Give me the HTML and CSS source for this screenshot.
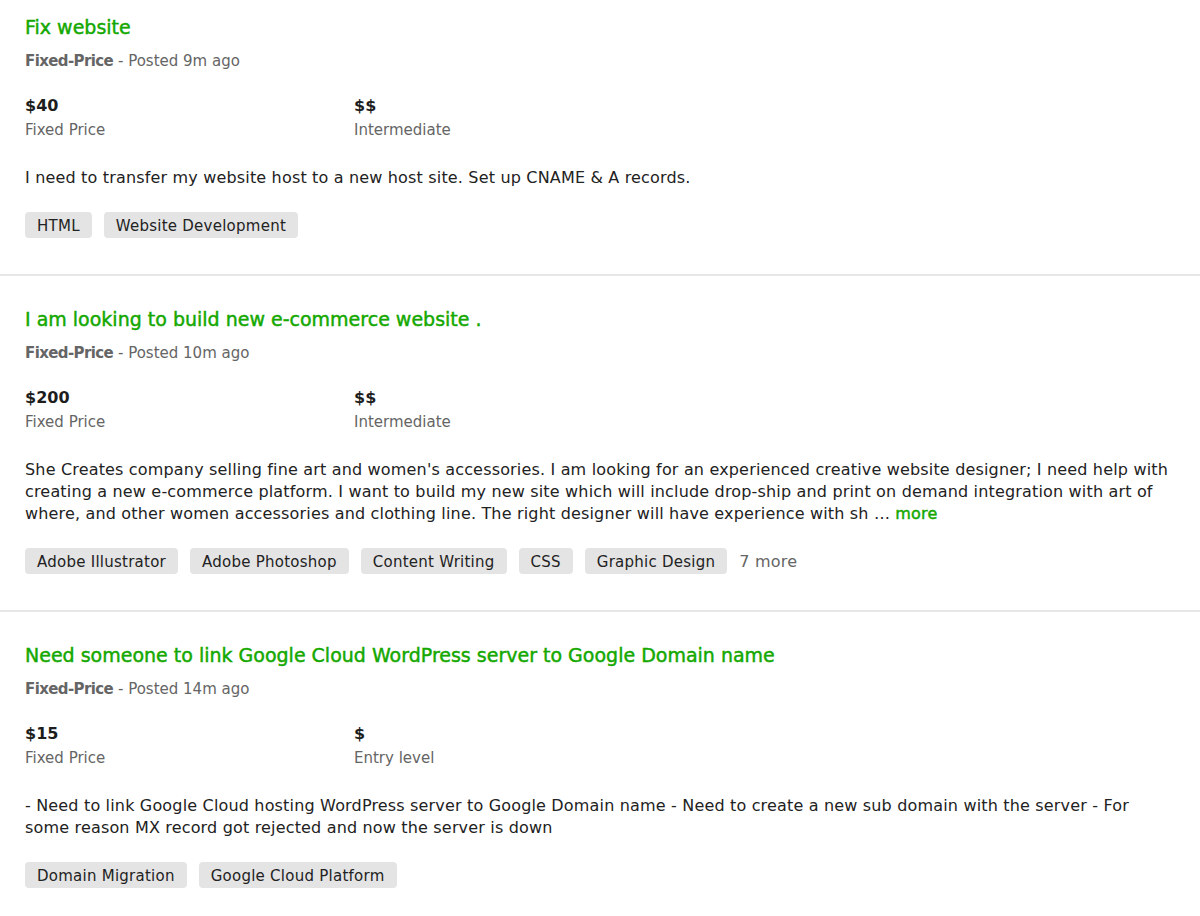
FILE: index.html
```html
<!DOCTYPE html>
<html>
<head>
<meta charset="utf-8">
<link rel="stylesheet" href="styles.css">
</head>
<body>
<div class="feed">
  <section class="job">
    <h2 class="job-title">Fix website</h2>
    <div class="job-meta"><strong>Fixed-Price</strong> - Posted 9m ago</div>
    <div class="job-terms">
      <div class="term"><div class="term-value">$40</div><div class="term-label">Fixed Price</div></div>
      <div class="term"><div class="term-value">$$</div><div class="term-label">Intermediate</div></div>
    </div>
    <p class="job-desc">I need to transfer my website host to a new host site. Set up CNAME &amp; A records.</p>
    <div class="tags">
      <span class="tag">HTML</span>
      <span class="tag">Website Development</span>
    </div>
  </section>
  <section class="job">
    <h2 class="job-title">I am looking to build new e-commerce website .</h2>
    <div class="job-meta"><strong>Fixed-Price</strong> - Posted 10m ago</div>
    <div class="job-terms">
      <div class="term"><div class="term-value">$200</div><div class="term-label">Fixed Price</div></div>
      <div class="term"><div class="term-value">$$</div><div class="term-label">Intermediate</div></div>
    </div>
    <p class="job-desc">She Creates company selling fine art and women's accessories. I am looking for an experienced creative website designer; I need help with creating a new e-commerce platform. I want to build my new site which will include drop-ship and print on demand integration with art of where, and other women accessories and clothing line. The right designer will have experience with sh &hellip; <a class="more" href="#">more</a></p>
    <div class="tags">
      <span class="tag">Adobe Illustrator</span>
      <span class="tag">Adobe Photoshop</span>
      <span class="tag">Content Writing</span>
      <span class="tag">CSS</span>
      <span class="tag">Graphic Design</span>
      <span class="tags-more">7 more</span>
    </div>
  </section>
  <section class="job">
    <h2 class="job-title">Need someone to link Google Cloud WordPress server to Google Domain name</h2>
    <div class="job-meta"><strong>Fixed-Price</strong> - Posted 14m ago</div>
    <div class="job-terms">
      <div class="term"><div class="term-value">$15</div><div class="term-label">Fixed Price</div></div>
      <div class="term"><div class="term-value">$</div><div class="term-label">Entry level</div></div>
    </div>
    <p class="job-desc">- Need to link Google Cloud hosting WordPress server to Google Domain name - Need to create a new sub domain with the server - For some reason MX record got rejected and now the server is down</p>
    <div class="tags">
      <span class="tag">Domain Migration</span>
      <span class="tag">Google Cloud Platform</span>
    </div>
  </section>
</div>
</body>
</html>
```
FILE: styles.css
```css
html, body {
  margin: 0;
  padding: 0;
  background: #ffffff;
}
body {
  font-family: "DejaVu Sans", "Open Sans", sans-serif;
  color: #222222;
}
.feed {
  display: flex;
  flex-direction: column;
}
.job {
  padding: 31px 25px 36px 25px;
  border-bottom: 2px solid #e6e6e6;
}
.job:first-child {
  padding-top: 15px;
}
.job:last-child {
  border-bottom: none;
}
.job-title {
  margin: 0;
  font-size: 19px;
  line-height: 24px;
  font-weight: 400;
  color: #14a800;
  -webkit-text-stroke: 0.45px #14a800;
}
.job-meta {
  margin-top: 12px;
  font-size: 15px;
  line-height: 20px;
  color: #656565;
}
.job-meta strong {
  font-weight: 700;
  letter-spacing: -0.6px;
}
.job-terms {
  margin-top: 23px;
  display: grid;
  grid-template-columns: 329px auto;
}
.term-value {
  font-size: 16px;
  line-height: 24px;
  font-weight: 700;
  color: #1d1d1d;
}
.term-label {
  font-size: 15px;
  line-height: 24px;
  color: #656565;
}
.job-desc {
  margin: 25px 0 0 0;
  font-size: 16px;
  line-height: 22px;
  letter-spacing: 0.17px;
  color: #222222;
}
.more {
  color: #14a800;
  text-decoration: none;
  -webkit-text-stroke: 0.45px #14a800;
}
.tags {
  margin-top: 23px;
  display: flex;
  align-items: center;
  gap: 12px;
}
.tag {
  display: inline-flex;
  align-items: center;
  height: 26px;
  padding: 1px 12px 0 12px;
  box-sizing: border-box;
  border-radius: 4px;
  background: #e4e4e4;
  font-size: 15px;
  letter-spacing: 0.25px;
  color: #222222;
}
.tags-more {
  font-size: 16px;
  letter-spacing: 0.2px;
  color: #656565;
}
```
